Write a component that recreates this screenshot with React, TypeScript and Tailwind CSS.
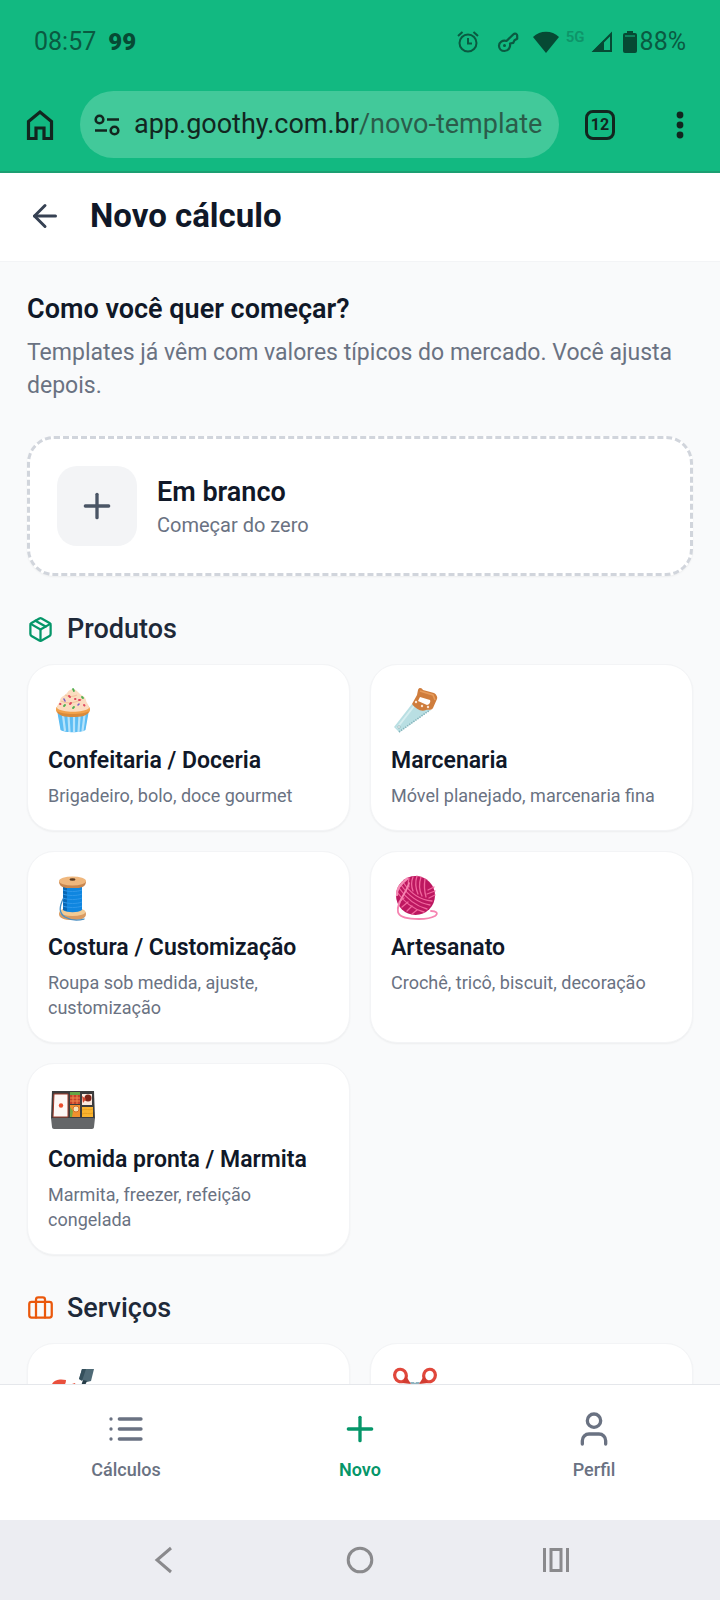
import type { ReactNode } from "react";
import { ArrowLeft, Briefcase, Package, Plus, User } from "lucide-react";
import clsx from "clsx";

type Template = {
  id: string;
  icon: ReactNode;
  title?: string;
  description?: string;
};

function CupcakeIcon() {
  return (
    <svg viewBox="0 0 48 48" className="size-12" aria-hidden="true">
      <path d="M9.500 27h31l-3 17c-4 3-21 3-25 0z" fill="#5dbdf3" />
      <path d="M15 29l2 16M20.500 30l1 16M26 30v16M31.500 30l-1 16M36.500 29l-2 16" stroke="#b5e3fb" strokeWidth="2.200" />
      <path d="M8 23c0-4 8-7 17-7s17 3 17 7c1 5-7 7-17 7S7 28 8 23z" fill="#f2a24b" />
      <path d="M9 25c4 4 28 4 32 0-1 5-8 6-16 6S10 30 9 25z" fill="#d98a3a" />
      <path d="M9 22c0-4 3-5 3-8 1-4 5-4 7-7s4-4 6-4 4 2 6 4c3 3 6 3 7 7 0 3 3 4 3 8-5 5-27 5-32 0z" fill="#fbdcc0" />
      <path d="M13 15c6 3 14 2 21-2M17 9c4 2 8 2 12 0" stroke="#f4c49f" strokeWidth="1.200" fill="none" />
      <path d="M25 3l1 2M16 20l1-1M34 11l1 1M25 22l1-1" stroke="#4caf50" strokeWidth="1.800" strokeLinecap="round" />
      <path d="M16 13l1 2M30 19l1-1" stroke="#7b5fc5" strokeWidth="1.600" strokeLinecap="round" />
      <path d="M22 11l-1-1M12 18h.5M22 18l1-1M31 14h1M36 19l.5.5M27 13h.5" stroke="#e0455e" strokeWidth="1.900" strokeLinecap="round" />
    </svg>
  );
}

function SawIcon() {
  return (
    <svg viewBox="0 0 48 48" className="size-12" aria-hidden="true">
      <path d="M21 18L3 41l5 5 31-22z" fill="#b9dfe3" />
      <path d="M23 20L6 42" stroke="#d6eef0" strokeWidth="2" />
      <path d="M8 46l31-22" stroke="#84b5bc" strokeWidth="1.600" strokeDasharray="1.500 1" />
      <circle cx="8" cy="41" r="1.300" fill="#fff" stroke="#7fa4aa" strokeWidth=".6" />
      <path fillRule="evenodd" d="M21 18l5-9 1-5c1-3 4-2 5 0l11 3c2 1 4 4 3 6l-4 9c-2 3-5 1-7 2-5 2-10-1-14-6zm8-7l-2 4 9 4c2 0 4-3 3-5z" fill="#cf7d3d" />
      <path d="M29 5l13 4 2 5" stroke="#e69b5b" strokeWidth="1.600" fill="none" />
      <circle cx="25" cy="16" r="1.200" fill="#fbe6d4" />
      <circle cx="31" cy="20" r="1.200" fill="#fbe6d4" />
      <circle cx="37" cy="21" r="1.200" fill="#fbe6d4" />
    </svg>
  );
}

function ThreadIcon() {
  return (
    <svg viewBox="0 0 48 48" className="size-12" aria-hidden="true">
      <path d="M11 41c0-4 5-6 13-6s14 2 14 6c0 5-6 6-14 6s-13-2-13-6z" fill="#d99b62" />
      <ellipse cx="24.500" cy="39" rx="13" ry="4" fill="#f2cb95" />
      <path d="M15 12h19v25c-4 3-15 3-19 0z" fill="#0f86e0" />
      <path d="M15 12h4v26l-4-1z" fill="#0867b5" />
      <path d="M15 17c5 2 14 2 19 0M15 21c5 2 14 2 19 0M15 25c5 2 14 2 19 0M15 29c5 2 14 2 19 0M15 33c5 2 14 2 19 0" stroke="#2f98ea" strokeWidth="1" fill="none" />
      <path d="M11 8c0 5 3 6 7 7h13c4-1 7-2 7-7z" fill="#c8864e" />
      <ellipse cx="24.500" cy="8" rx="13.500" ry="4.500" fill="#efb77d" />
      <ellipse cx="24.500" cy="6.500" rx="3" ry="1.200" fill="#5a3a20" />
      <path d="M15 26c-4 9-4 14 2 18 5 3 12 4 19 2" stroke="#4a90c4" strokeWidth="1.300" fill="none" strokeLinecap="round" />
    </svg>
  );
}

function YarnIcon() {
  return (
    <svg viewBox="0 0 48 48" className="size-12" aria-hidden="true">
      <circle cx="24.500" cy="22.500" r="19.500" fill="#bd1760" />
      <g stroke="#f0669d" strokeWidth="1.300" fill="none" strokeLinecap="round">
        <path d="M8 15c7 10 17 18 28 21M6 19c7 10 16 17 27 20M10 12c7 10 17 18 29 20M12 9c7 11 17 18 29 19" />
        <path d="M22 4c-2 5-2 9 0 14M26 3c-2 6-2 11 1 18M30 4c-2 6-2 13 1 19M34 6c-1 6-1 11 1 18M18 5c-1 3-1 6 0 9" />
        <path d="M37 17l6-3M36 21l8-3M38 25l6-3M8 29l5-4M11 34l6-5M16 38l5-5M21 41l5-4" />
      </g>
      <path d="M17 5C9 11 5 17 6 23" stroke="#f58db6" strokeWidth="2.200" fill="none" />
      <path d="M18 10c-3 11-13 20-11 29 2 9 30 8 37 4 4-3 1-5-4-5" stroke="#f684b1" strokeWidth="1.800" fill="none" strokeLinecap="round" />
    </svg>
  );
}

function BentoIcon() {
  return (
    <svg viewBox="0 0 48 48" className="size-12" aria-hidden="true">
      <path d="M4 6h42l1 28H3z" fill="#3c3c3d" />
      <path d="M3 33h44l-1 9c0 1-1 2-2 2H6c-1 0-2-1-2-2z" fill="#646668" />
      <path d="M6 9h14v23H5z" fill="#fdf7f5" stroke="#9e3a2b" strokeWidth="1" />
      <circle cx="13" cy="20.500" r="2.200" fill="#ea4c2c" />
      <path d="M22 7h10v12H22z" fill="#c7412b" />
      <path d="M22 7h10v3H22z" fill="#66a444" />
      <path d="M22 13h10M22 16h10M25 10v9M29 10v9" stroke="#f08a4e" strokeWidth="1" />
      <path d="M22 20h10v12H22z" fill="#f0902e" />
      <circle cx="28" cy="24" r="3" fill="#f8e3b8" stroke="#d46f2a" strokeWidth="1" />
      <path d="M22 22l3 4-1 6h-2z" fill="#79a83f" />
      <path d="M34 9h10v11H34z" fill="#fbe9de" />
      <circle cx="40" cy="13" r="3.500" fill="#7d2418" />
      <path d="M34 11l4 3-3 4z" fill="#d6452c" />
      <path d="M34 22h11v10H34z" fill="#fbb42f" />
      <path d="M34 25c4-2 7 1 11-1M34 29c4-2 7 1 11-1" stroke="#e9a020" strokeWidth="1" fill="none" />
    </svg>
  );
}

function NailPolishIcon() {
  return (
    <svg viewBox="0 0 48 48" className="size-12" aria-hidden="true">
      <path d="M34 4h12l-3 12-4 1-8-3z" fill="#4f6a76" />
      <path d="M34 4h4l-4 12-3-2z" fill="#35505c" />
      <path d="M35 15l4 1-4 9-3-1z" fill="#263d48" />
      <path d="M4 19c3-5 9-5 14-4 0 5-4 10-12 13z" fill="#e9503c" />
      <path d="M4 22c-2 6 0 20 12 23s26-3 24-9-14-8-18-10-2-6-5-6-6 4-8 6z" fill="#f6bd91" />
      <path d="M24 19l3-1 1 3-4 1z" fill="#e9503c" />
    </svg>
  );
}

function ScissorsIcon() {
  return (
    <svg viewBox="0 0 48 48" className="size-12" aria-hidden="true">
      <path d="M19 17l15 29c4-3 3-8 1-11L23 17zM29 17L14 46c-4-3-3-8-1-11l12-18z" fill="#8fb3bf" />
      <ellipse cx="9.500" cy="10.500" rx="5.800" ry="6.300" fill="none" stroke="#e0473b" strokeWidth="3.200" transform="rotate(-20 9.500 10.500)" />
      <ellipse cx="38.500" cy="10.500" rx="5.800" ry="6.300" fill="none" stroke="#e0473b" strokeWidth="3.200" transform="rotate(20 38.500 10.500)" />
      <path d="M15 11l5 8-9-1zM33 11l-5 8 9-1z" fill="#d23c31" />
    </svg>
  );
}

const products: Template[] = [
  { id: "confeitaria", icon: <CupcakeIcon />, title: "Confeitaria / Doceria", description: "Brigadeiro, bolo, doce gourmet" },
  { id: "marcenaria", icon: <SawIcon />, title: "Marcenaria", description: "Móvel planejado, marcenaria fina" },
  { id: "costura", icon: <ThreadIcon />, title: "Costura / Customização", description: "Roupa sob medida, ajuste, customização" },
  { id: "artesanato", icon: <YarnIcon />, title: "Artesanato", description: "Crochê, tricô, biscuit, decoração" },
  { id: "marmita", icon: <BentoIcon />, title: "Comida pronta / Marmita", description: "Marmita, freezer, refeição congelada" },
];

const services: Template[] = [
  { id: "manicure", icon: <NailPolishIcon /> },
  { id: "cabelo", icon: <ScissorsIcon /> },
];

function StatusBar() {
  return (
    <div className="flex h-[84px] items-center justify-between px-[34px] text-[25px] leading-8 text-[#0a5a41]">
      <div className="flex items-center gap-3">
        <span>08:57</span>
        <span className="text-2xl font-black text-[#064a34]">99</span>
      </div>
      <div className="flex items-center">
        <svg viewBox="0 0 22 22" className="mr-[18px] size-[22px]" fill="none" stroke="currentColor" strokeWidth="2" aria-hidden="true">
          <circle cx="11" cy="12" r="8.500" />
          <path d="M11 7v5.500h4M1 5l4.500-4M21 5l-4.500-4" />
        </svg>
        <svg viewBox="0 0 22 22" className="mr-[14px] size-[22px]" fill="none" stroke="currentColor" strokeWidth="2.200" strokeLinejoin="round" aria-hidden="true">
          <path d="M9.500 10L16.500 3.200c1.500-1.400 3.700-.4 3.700 1.400v3.200l-2.700 1.400-1.200 2.600-3.300.7c.7 3.500-1.500 7.500-5.500 7.500-3.300 0-5.500-2.500-5.500-5.300 0-3.200 3.500-6 7.500-4.700z" />
          <circle cx="7.500" cy="14.500" r="1.500" fill="currentColor" stroke="none" />
        </svg>
        <svg viewBox="0 0 26 22" className="mr-[7px] h-[22px] w-[26px]" fill="#064a34" aria-hidden="true">
          <path d="M0 6C7-1 19-1 26 6L13 22z" />
        </svg>
        <span className="mr-[6px] self-start pt-[3px] text-[15px] leading-4 font-semibold text-[#0e9469]">5G</span>
        <svg viewBox="0 0 22 22" className="mr-[10px] size-[22px]" aria-hidden="true">
          <path d="M20 3v17H3z" fill="none" stroke="#064a34" strokeWidth="2" />
          <path d="M1 21L13 9v12z" fill="#064a34" />
        </svg>
        <svg viewBox="0 0 14 22" className="mr-[3px] h-[22px] w-[14px]" aria-hidden="true">
          <path d="M4 0h6v2H4z" fill="#064a34" />
          <rect y="2" width="14" height="20" rx="2" fill="#064a34" />
          <path d="M2 5h10" stroke="#12b981" />
        </svg>
        <span>88%</span>
      </div>
    </div>
  );
}

function BrowserBar() {
  return (
    <div className="flex h-[87px] items-center pt-[7px] pr-[30px] pb-[13px] pl-[26px] text-[#12261f]">
      <button type="button" aria-label="Página inicial" className="shrink-0">
        <svg viewBox="0 0 28 32" className="h-8 w-7" fill="none" stroke="currentColor" strokeWidth="3.200">
          <path d="M2.500 29.500V12.500L14 3l11.500 9.500v17h-7.500v-10.500h-8v10.500z" />
        </svg>
      </button>
      <a
        href="#"
        className="mx-[26px] flex h-[67px] min-w-0 flex-1 items-center gap-[14px] rounded-full bg-[#42c99a] pl-[14px] text-[27px] whitespace-nowrap"
      >
        <svg viewBox="0 0 26 22" className="h-[22px] w-[26px] shrink-0" fill="none" stroke="currentColor" strokeWidth="2.600" aria-hidden="true">
          <circle cx="5.500" cy="5.500" r="3.800" />
          <path d="M13 5.500h12M1 16.500h12" />
          <circle cx="20.500" cy="16.500" r="3.800" />
        </svg>
        <span>
          app.goothy.com.br<span className="text-[#2b5c4a]">/novo-template</span>
        </span>
      </a>
      <button
        type="button"
        aria-label="Abas abertas"
        className="flex size-[30px] shrink-0 items-center justify-center rounded-lg border-3 border-current text-base leading-4 font-bold"
      >
        12
      </button>
      <button type="button" aria-label="Mais opções" className="ml-[55px] w-5 shrink-0">
        <svg viewBox="0 0 20 30" className="h-[30px] w-5" fill="currentColor">
          <circle cx="10" cy="5" r="3.400" />
          <circle cx="10" cy="15" r="3.400" />
          <circle cx="10" cy="25" r="3.400" />
        </svg>
      </button>
    </div>
  );
}

function TemplateCard({ template }: { template: Template }) {
  return (
    <button
      type="button"
      aria-label={template.title ?? template.id}
      className="flex min-h-[167px] flex-col items-start rounded-[27px] border border-gray-100 bg-white px-5 pt-[21px] pb-[22px] text-left shadow-xs"
    >
      {template.icon}
      {template.title && (
        <span className="mt-[11px] text-[23px] leading-[32px] font-semibold text-gray-900">{template.title}</span>
      )}
      {template.description && (
        <span className="mt-[6px] text-[18px] leading-[25px] text-gray-500">{template.description}</span>
      )}
    </button>
  );
}

function Section({ icon, title, items }: { icon: ReactNode; title: string; items: Template[] }) {
  return (
    <section className="mt-[34px]">
      <h3 className="flex items-center gap-[13px] text-[27px] leading-[38px] font-medium text-gray-800">
        {icon}
        {title}
      </h3>
      <div className="mt-4 grid grid-cols-2 gap-5">
        {items.map((t) => (
          <TemplateCard key={t.id} template={t} />
        ))}
      </div>
    </section>
  );
}

function NavItem({ label, active, children }: { label: string; active?: boolean; children: ReactNode }) {
  return (
    <a
      href="#"
      aria-current={active ? "page" : undefined}
      className={clsx(
        "flex flex-col items-center gap-2 pt-6 text-[18px] leading-[25px]",
        active ? "font-semibold text-[#059669]" : "font-medium text-gray-500"
      )}
    >
      {children}
      {label}
    </a>
  );
}

export default function App() {
  return (
    <div className="flex h-screen flex-col bg-gray-50 font-['Roboto',sans-serif]">
      <div className="shrink-0 border-b-2 border-[#1b9f72] bg-[#12b981]">
        <StatusBar />
        <BrowserBar />
      </div>

      <header className="flex h-[89px] shrink-0 items-center gap-[27px] border-b border-gray-100 bg-white px-[27px] pb-0.5">
        <button type="button" aria-label="Voltar" className="text-gray-700">
          <ArrowLeft size={36} />
        </button>
        <h1 className="text-[33px] leading-[46px] font-bold text-gray-900">Novo cálculo</h1>
      </header>

      <main className="min-h-0 flex-1 overflow-y-auto px-[27px] pt-7 pb-8 [scrollbar-width:none]">
        <h2 className="text-[27px] leading-[38px] font-semibold text-gray-900">Como você quer começar?</h2>
        <p className="mt-2 text-[23px] leading-[33px] text-gray-500">
          Templates já vêm com valores típicos do mercado. Você ajusta depois.
        </p>

        <button
          type="button"
          className="mt-[34px] flex w-full items-center gap-5 rounded-[27px] border-3 border-dashed border-gray-300 bg-white p-[27px] text-left shadow-xs"
        >
          <span className="flex size-20 items-center justify-center rounded-[20px] bg-gray-100 text-gray-600">
            <Plus size={40} strokeWidth={2} />
          </span>
          <span className="flex flex-col">
            <span className="text-[27px] leading-[38px] font-semibold text-gray-900">Em branco</span>
            <span className="text-[20px] leading-[28px] text-gray-500">Começar do zero</span>
          </span>
        </button>

        <Section icon={<Package size={27} className="text-[#059669]" />} title="Produtos" items={products} />
        <Section icon={<Briefcase size={27} className="text-[#ea580c]" />} title="Serviços" items={services} />
      </main>

      <nav className="grid h-[136px] shrink-0 grid-cols-3 border-t border-gray-200 bg-white px-[9px]">
        <NavItem label="Cálculos">
          <svg viewBox="0 0 24 24" className="size-10" fill="none" stroke="currentColor" strokeWidth="2" strokeLinecap="round" aria-hidden="true">
            <path d="M8 6h13M8 12h13M8 18h13M3 6h.01M3 12h.01M3 18h.01" />
          </svg>
        </NavItem>
        <NavItem label="Novo" active>
          <Plus size={40} />
        </NavItem>
        <NavItem label="Perfil">
          <User size={40} />
        </NavItem>
      </nav>

      <div className="grid h-20 shrink-0 grid-cols-3 items-center bg-[#ecedf2] px-[66px] text-[#8a8a8d]">
        <button type="button" aria-label="Voltar no sistema" className="flex justify-center">
          <svg viewBox="0 0 28 28" className="size-7" fill="none" stroke="currentColor" strokeWidth="3">
            <path d="M21 2L7 14l14 12" />
          </svg>
        </button>
        <button type="button" aria-label="Início" className="flex justify-center">
          <svg viewBox="0 0 28 28" className="size-7" fill="none" stroke="currentColor" strokeWidth="3">
            <circle cx="14" cy="14" r="11.800" />
          </svg>
        </button>
        <button type="button" aria-label="Apps recentes" className="flex justify-center">
          <svg viewBox="0 0 28 28" className="size-7" fill="none" stroke="currentColor" strokeWidth="3">
            <path d="M2.500 2v24M25.500 2v24M9 3.500h10v21H9z" />
          </svg>
        </button>
      </div>
    </div>
  );
}
